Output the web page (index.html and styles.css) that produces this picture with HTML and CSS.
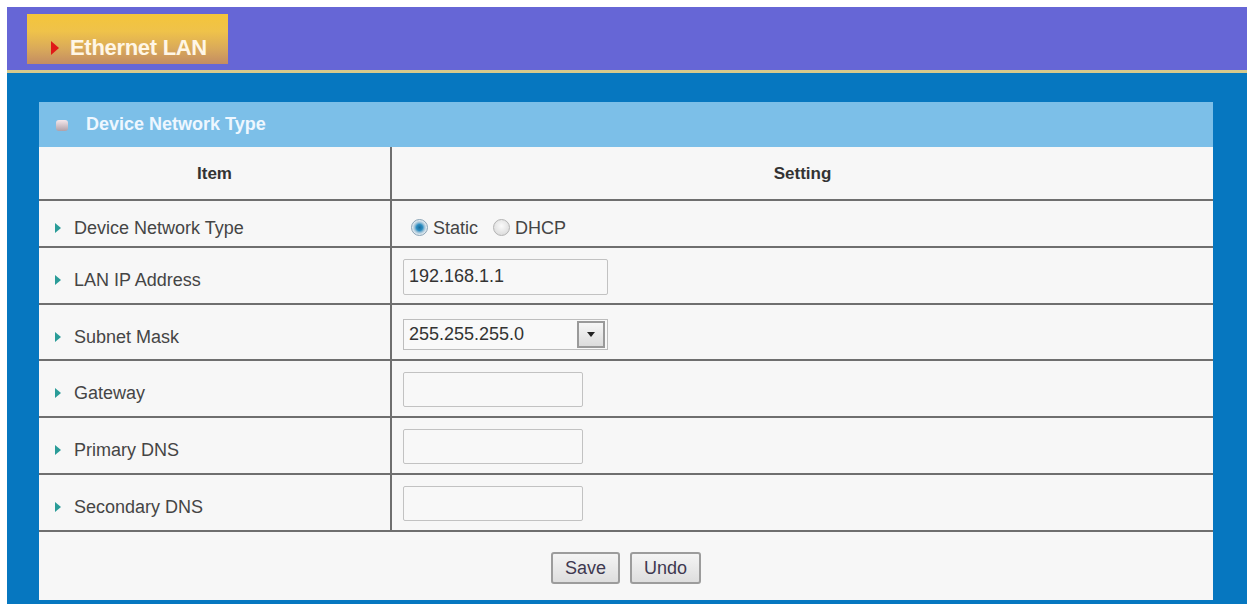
FILE: index.html
```html
<!DOCTYPE html>
<html>
<head>
<meta charset="utf-8">
<link rel="stylesheet" href="styles.css">
</head>
<body>
<div class="page">
  <div class="topbar">
    <div class="tab"><span class="tab-arrow"></span><span class="tab-text">Ethernet LAN</span></div>
  </div>
  <div class="rule"></div>
  <div class="content">
    <div class="panel-head"><span class="panel-icon"></span><span>Device Network Type</span></div>
    <table class="grid">
      <tr class="row-head"><th class="col-item">Item</th><th>Setting</th></tr>
      <tr class="row-radio">
        <td class="label"><span class="mark"></span>Device Network Type</td>
        <td class="value radios">
          <span class="radio checked"></span><span class="rtext">Static</span>
          <span class="radio"></span><span class="rtext">DHCP</span>
        </td>
      </tr>
      <tr class="row-a">
        <td class="label"><span class="mark"></span>LAN IP Address</td>
        <td class="value"><span class="field wide">192.168.1.1</span></td>
      </tr>
      <tr class="row-b">
        <td class="label"><span class="mark"></span>Subnet Mask</td>
        <td class="value"><span class="select"><span class="select-text">255.255.255.0</span><span class="select-btn"><span class="caret"></span></span></span></td>
      </tr>
      <tr class="row-a">
        <td class="label"><span class="mark"></span>Gateway</td>
        <td class="value"><span class="field"></span></td>
      </tr>
      <tr class="row-c">
        <td class="label"><span class="mark"></span>Primary DNS</td>
        <td class="value"><span class="field"></span></td>
      </tr>
      <tr class="row-c">
        <td class="label"><span class="mark"></span>Secondary DNS</td>
        <td class="value"><span class="field"></span></td>
      </tr>
      <tr class="row-buttons">
        <td colspan="2" class="buttons"><span class="btn">Save</span><span class="btn">Undo</span></td>
      </tr>
    </table>
  </div>
</div>
</body>
</html>
```
FILE: styles.css
```css
html, body {
  margin: 0;
  padding: 0;
  background: #ffffff;
}
body {
  font-family: "Liberation Sans", Arial, sans-serif;
  overflow: hidden;
}
.page {
  margin: 7px 4px 0 7px;
  width: 1240px;
}
.topbar {
  height: 63px;
  background: #6666d6;
  padding: 7px 0 0 20px;
  box-sizing: border-box;
}
.tab {
  width: 201px;
  height: 50px;
  background: linear-gradient(#f4c53a 0%, #efc24a 35%, #d9a95a 70%, #c38c62 100%);
  display: flex;
  align-items: flex-end;
  padding: 0 0 3px 24px;
  box-sizing: border-box;
}
.tab-arrow {
  width: 0;
  height: 0;
  border-top: 7px solid transparent;
  border-bottom: 7px solid transparent;
  border-left: 8px solid #e01818;
  margin: 0 11px 6px 0;
}
.tab-text {
  color: #fff6e6;
  font-weight: bold;
  font-size: 22px;
  line-height: 26px;
  letter-spacing: -0.3px;
}
.rule {
  height: 3px;
  background: #d6c98c;
}
.content {
  background: #0677c0;
  padding: 29px 34px 0 32px;
  height: 540px;
  box-sizing: border-box;
}
.panel-head {
  height: 45px;
  background: #7cbfe8;
  display: flex;
  align-items: center;
  padding-left: 17px;
  color: #eef7ff;
  font-weight: bold;
  font-size: 18px;
}
.panel-icon {
  width: 12px;
  height: 11px;
  border-radius: 3px;
  background: linear-gradient(#f6e8ec, #b0a0a8);
  margin-right: 18px;
  margin-top: 2px;
}
.grid {
  width: 100%;
  border-collapse: collapse;
  background: #f7f7f7;
  font-size: 18px;
  color: #454545;
}
.grid th, .grid td {
  border: 2px solid #6f6f6f;
  padding: 0;
}
.grid tr:first-child th { border-top: none; }
.grid tr th:first-child, .grid tr td:first-child { border-left: none; }
.grid tr th:last-child, .grid tr td:last-child { border-right: none; }
.grid th {
  font-weight: bold;
  font-size: 17px;
  color: #333;
  padding-top: 2px;
}
.col-item { width: 351px; }
.row-head { height: 53px; }
.row-radio { height: 47px; }
.row-a { height: 57px; }
.row-b { height: 56px; }
.row-c { height: 57px; }
.row-buttons { height: 69px; }
.row-buttons td { border-bottom: none; }
.grid td.label {
  padding: 10px 0 0 16px;
}
.mark {
  display: inline-block;
  width: 0;
  height: 0;
  border-top: 5px solid transparent;
  border-bottom: 5px solid transparent;
  border-left: 6px solid #2a9c98;
  margin-right: 13px;
  vertical-align: 1px;
}
.grid td.value {
  padding-left: 11px;
}
.grid td.radios {
  padding-top: 10px;
}
.radio {
  display: inline-block;
  width: 17px;
  height: 17px;
  border-radius: 50%;
  box-sizing: border-box;
  border: 1px solid #b4b4b4;
  background: radial-gradient(circle at 50% 40%, #fafafa, #d4d4d4);
  vertical-align: -2px;
  margin: 0 5px 0 8px;
}
.radio.checked {
  background: radial-gradient(circle, #1a6a9a 0, #2a8cc0 3px, #9cc2d8 5px, #e0e8ee 7px);
  border-color: #8aa4b6;
}
.rtext { margin-right: 2px; }
.field {
  display: inline-block;
  width: 180px;
  height: 35px;
  box-sizing: border-box;
  border: 1px solid #c2c2c2;
  border-radius: 2px;
  background: #f8f8f8;
  vertical-align: middle;
  margin-top: 2px;
}
.field.wide {
  width: 205px;
  height: 36px;
  padding: 6px 0 0 5px;
  color: #333;
}
.select {
  display: inline-flex;
  align-items: center;
  width: 205px;
  height: 31px;
  box-sizing: border-box;
  border: 1px solid #bdbdbd;
  background: #f9f9f9;
  vertical-align: middle;
  margin-top: 4px;
  padding: 0 2px 0 5px;
  color: #333;
}
.select-text { flex: 1; }
.select-btn {
  width: 28px;
  height: 27px;
  box-sizing: border-box;
  border: 2px solid #9a9a9a;
  background: linear-gradient(#f6f6f6, #dcdcdc);
  display: flex;
  align-items: center;
  justify-content: center;
}
.caret {
  width: 0;
  height: 0;
  border-left: 4px solid transparent;
  border-right: 4px solid transparent;
  border-top: 5px solid #222;
}
.grid td.buttons {
  text-align: center;
  padding-top: 4px;
}
.btn {
  display: inline-block;
  height: 32px;
  line-height: 28px;
  box-sizing: border-box;
  border: 2px solid #9c9c9c;
  border-radius: 3px;
  background: linear-gradient(#f4f4f4, #dedede);
  color: #3e3850;
  font-size: 18px;
  padding: 0 12px;
  margin: 0 5px;
  vertical-align: middle;
}
```
